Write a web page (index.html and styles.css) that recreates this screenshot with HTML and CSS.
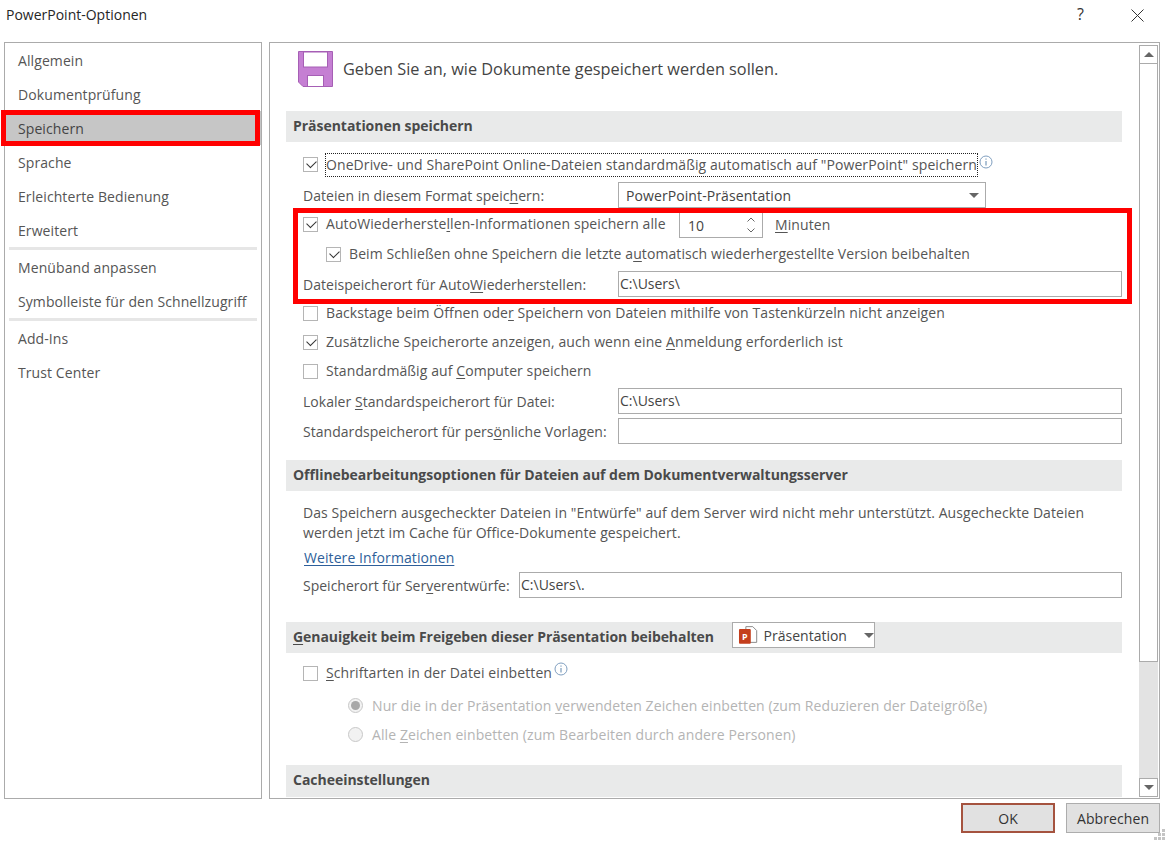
FILE: index.html
```html
<!DOCTYPE html>
<html lang="de">
<head>
<meta charset="utf-8">
<title>PowerPoint-Optionen</title>
<link rel="stylesheet" href="styles.css">
</head>
<body>
<div class="dialog">
  <header class="titlebar">
    <span class="title">PowerPoint-Optionen</span>
    <span class="help">?</span>
    <svg class="close" width="13" height="13" viewBox="0 0 13 13"><path d="M.5.5l12 12M12.500.5l-12 12" stroke="#333" fill="none"/></svg>
  </header>
  <div class="main">
    <nav class="nav">
      <div class="nav-item">Allgemein</div>
      <div class="nav-item">Dokumentprüfung</div>
      <div class="nav-item selected">Speichern</div>
      <div class="nav-item">Sprache</div>
      <div class="nav-item">Erleichterte Bedienung</div>
      <div class="nav-item">Erweitert</div>
      <div class="nav-sep"></div>
      <div class="nav-item">Menüband anpassen</div>
      <div class="nav-item">Symbolleiste für den Schnellzugriff</div>
      <div class="nav-sep"></div>
      <div class="nav-item">Add-Ins</div>
      <div class="nav-item">Trust Center</div>
    </nav>
    <section class="panel">
      <div class="content">
        <div class="page-head">
          <svg class="floppy" width="35" height="36" viewBox="0 0 35 36">
            <path d="M.5.500h34v35H5l-4.500-4.500z" fill="#c57fd3" stroke="#a65fb5"/>
            <rect x="5.500" y="1" width="24" height="15" fill="#fff" stroke="#a65fb5"/>
            <rect x="9.500" y="24.500" width="16" height="11" fill="#fff" stroke="#a65fb5"/>
          </svg>
          <span class="page-title">Geben Sie an, wie Dokumente gespeichert werden sollen.</span>
        </div>

        <h2 class="bar">Präsentationen speichern</h2>
        <div class="row first">
          <span class="cb on"></span>
          <span class="label focus">OneDrive- und SharePoint Online-Dateien standardmäßig automatisch auf "PowerPoint" speichern</span>
          <svg class="info raised" width="14" height="14" viewBox="0 0 14 14"><circle cx="7" cy="7" r="6" fill="none" stroke="#7f9fc0"/><path d="M7 6v4.500M7 3.500v1.200" stroke="#5f86ad" fill="none"/></svg>
        </div>
        <div class="row mt2">
          <span class="field-label">Dateien in diesem Format speic<u>h</u>ern:</span>
          <span class="select"><span>PowerPoint-Präsentation</span><i class="caret"></i></span>
        </div>
        <div class="highlight">
          <div class="row">
            <span class="cb on"></span>
            <span class="label auto-label">AutoWiederherste<u>l</u>len-Informationen speichern alle</span>
            <span class="spin"><span>10</span>
              <svg width="10" height="20" viewBox="0 0 10 20"><path d="M1.500 6.500L5 3l3.500 3.500M1.500 13.500L5 17l3.500-3.500" stroke="#666" fill="none"/></svg>
            </span>
            <span class="minutes"><u>M</u>inuten</span>
          </div>
          <div class="row mt1 indent">
            <span class="cb on"></span>
            <span class="label">Beim Schließen ohne Speichern die letzte a<u>u</u>tomatisch wiederhergestellte Version beibehalten</span>
          </div>
          <div class="row mt1">
            <span class="field-label">Dateispeicherort für Auto<u>W</u>iederherstellen:</span>
            <span class="input">C:\Users\</span>
          </div>
        </div>
        <div class="row">
          <span class="cb"></span>
          <span class="label">Backstage beim Öffnen ode<u>r</u> Speichern von Dateien mithilfe von Tastenkürzeln nicht anzeigen</span>
        </div>
        <div class="row">
          <span class="cb on"></span>
          <span class="label">Zusätzliche Speicherorte anzeigen, auch wenn eine <u>A</u>nmeldung erforderlich ist</span>
        </div>
        <div class="row">
          <span class="cb"></span>
          <span class="label">Standardmäßig auf <u>C</u>omputer speichern</span>
        </div>
        <div class="row mt1">
          <span class="field-label">Lokaler <u>S</u>tandardspeicherort für Datei:</span>
          <span class="input">C:\Users\</span>
        </div>
        <div class="row mt1">
          <span class="field-label">Standardspeicherort für pers<u>ö</u>nliche Vorlagen:</span>
          <span class="input"></span>
        </div>

        <h2 class="bar bar-offline">Offlinebearbeitungsoptionen für Dateien auf dem Dokumentverwaltungsserver</h2>
        <p class="para">Das Speichern ausgecheckter Dateien in "Entwürfe" auf dem Server wird nicht mehr unterstützt. Ausgecheckte Dateien werden jetzt im Cache für Office-Dokumente gespeichert.</p>
        <div class="link-row"><span class="link">Weitere Informationen</span></div>
        <div class="row mt1">
          <span class="field-label short">Speicherort für Ser<u>v</u>erentwürfe:</span>
          <span class="input">C:\Users\.</span>
        </div>

        <div class="bar bar-fidelity">
          <h2 class="bar-text"><u>G</u>enauigkeit beim Freigeben dieser Präsentation beibehalten</h2>
          <span class="pres-select">
            <svg width="21" height="20" viewBox="0 0 21 20">
              <path d="M8 1.500h7l4 4v12H8z" fill="#fff" stroke="#8a8a8a"/>
              <rect x="1" y="4" width="12" height="15" rx="1" fill="#c43e1c"/>
              <text x="4" y="15" class="pp-letter">P</text>
            </svg>
            <span>Präsentation</span><i class="caret"></i>
          </span>
        </div>
        <div class="row mt6">
          <span class="cb"></span>
          <span class="label"><u>S</u>chriftarten in der Datei einbetten</span>
          <svg class="info raised2" width="14" height="14" viewBox="0 0 14 14"><circle cx="7" cy="7" r="6" fill="none" stroke="#7f9fc0"/><path d="M7 6v4.500M7 3.500v1.200" stroke="#5f86ad" fill="none"/></svg>
        </div>
        <div class="row radio-row mt3">
          <span class="radio on"></span>
          <span class="label muted">Nur die in der Präsentation <u>v</u>erwendeten Zeichen einbetten (zum Reduzieren der Dateigröße)</span>
        </div>
        <div class="row radio-row">
          <span class="radio"></span>
          <span class="label muted">Alle <u>Z</u>eichen einbetten (zum Bearbeiten durch andere Personen)</span>
        </div>
        <h2 class="bar bar-cache">Cacheeinstellungen</h2>
      </div>
      <div class="scrollbar">
        <span class="sb-btn"><i class="tri up"></i></span>
        <span class="sb-thumb"></span>
        <span class="sb-track"></span>
        <span class="sb-btn"><i class="tri down"></i></span>
      </div>
    </section>
  </div>
  <footer class="footer">
    <span class="btn default">OK</span>
    <span class="btn">Abbrechen</span>
    <svg class="grip" width="11" height="11" viewBox="0 0 11 11"><path d="M8 0h3v3H8zM4 4h3v3H4zM8 4h3v3H8zM0 8h3v3H0zM4 8h3v3H4zM8 8h3v3H8z" fill="#c4c4c4"/></svg>
  </footer>
</div>
</body>
</html>
```

FILE: styles.css
```css
* { box-sizing: border-box; }
html, body { margin: 0; padding: 0; background: #fff; }
body { font-family: "Open Sans", "Noto Sans", sans-serif; font-size: 14px; letter-spacing: .09px; color: #555; }
u { text-underline-offset: 2px; }
.dialog { width: 1167px; height: 841px; overflow: hidden; position: relative; display: flex; flex-direction: column; }

.titlebar { height: 42px; flex: none; display: flex; align-items: flex-start; padding: 5px 23px 0 6px; }
.title { color: #262626; flex: 1; line-height: 19px; letter-spacing: 0; }
.help { color: #333; width: 54px; font-size: 16px; line-height: 19px; }
.close { margin-top: 4px; }

.main { height: 757px; flex: none; display: flex; padding: 0 7px 0 4px; gap: 7px; }
.nav { width: 258px; flex: none; border: 1px solid #ababab; }
.nav-item { height: 34px; padding-left: 13px; display: flex; align-items: center; position: relative; white-space: nowrap; }
.nav-item.selected { background: #c6c6c6; color: #444; }
.nav-item.selected::after { content: ""; position: absolute; left: -4px; right: 1px; top: -1px; bottom: -1px; border: 5px solid #f00; }
.nav-sep { height: 3px; background: #e6e6e6; margin: 0 4px; }

.panel { flex: 1; border: 1px solid #ababab; display: flex; min-width: 0; }
.content { width: 869px; flex: none; overflow: hidden; padding: 0 0 0 16px; }
.page-head { height: 68px; display: flex; align-items: flex-start; padding: 8px 0 0 12px; }
.floppy { flex: none; }
.page-title { font-size: 16.3px; letter-spacing: 0; margin: 7px 0 0 10px; color: #444; line-height: 22px; }

.bar { margin: 0; height: 31px; width: 836px; background: #e9eaea; font-size: 14px; font-weight: 700; letter-spacing: -.03px; color: #4a4a4a; padding: 0 7px 2px; display: flex; align-items: center; white-space: nowrap; }
.bar-offline { margin-top: 14px; }
.bar-fidelity { margin-top: 22px; align-items: flex-start; padding-bottom: 0; }
.bar-text { margin: 0; font-size: 14px; letter-spacing: -.07px; line-height: 29px; font-weight: 700; }
.bar-cache { margin-top: 16px; height: 32px; padding-bottom: 4px; }

.row { height: 29px; width: 836px; display: flex; align-items: center; padding-left: 17px; white-space: nowrap; }
.row.first { margin-top: 8px; }
.mt1 { margin-top: 1px; }
.mt2 { margin-top: 2px; }
.mt3 { margin-top: 3px; }
.mt6 { margin-top: 6px; }
.row.indent { padding-left: 40px; }
.row.radio-row { padding-left: 62px; }

.cb { width: 15px; height: 15px; flex: none; border: 1px solid #b5b5b5; background: #fff; margin-right: 8px; position: relative; }
.cb.on::after { content: ""; position: absolute; left: 3px; top: 2px; width: 8px; height: 5px; border-left: 1.500px solid #333; border-bottom: 1.500px solid #333; transform: rotate(-45deg); }
.radio { width: 15px; height: 15px; flex: none; border: 1px solid #c8c8c8; border-radius: 50%; background: #f2f2f2; margin-right: 9px; position: relative; }
.radio.on::after { content: ""; position: absolute; inset: 2px; border-radius: 50%; background: #a8a8a8; }
.label { line-height: 20px; margin-bottom: 2px; }
.focus { height: 24px; line-height: 22px; border: 1px dotted #222; margin: 0 0 0 -1px; }
.muted { color: #b4b4b4; margin: 1px 0 0; }
.info { flex: none; }
.raised { margin: -6px 0 0 1px; }
.raised2 { margin: -10px 0 0 2px; }

.field-label { width: 315px; flex: none; margin-bottom: 1px; letter-spacing: .04px; }
.field-label.short { width: 216px; letter-spacing: 0; }
.input { flex: 1; height: 26px; margin-bottom: 1px; border: 1px solid #ababab; background: #fff; padding-left: 1px; line-height: 24px; letter-spacing: 0; color: #444; }
.select { width: 368px; height: 26px; margin-bottom: 1px; border: 1px solid #ababab; display: flex; align-items: center; justify-content: space-between; padding: 0 6px 0 7px; color: #444; background: #fff; }
.caret { width: 0; height: 0; border-left: 5px solid transparent; border-right: 5px solid transparent; border-top: 5px solid #666; }

.highlight { position: relative; width: 836px; }
.highlight::after { content: ""; position: absolute; left: 7px; right: -10px; top: -2px; bottom: -5px; border: 5px solid #f00; pointer-events: none; }
.auto-label { margin-right: 0; width: 353px; flex: none; }
.spin { width: 84px; height: 26px; flex: none; border: 1px solid #ababab; display: flex; align-items: center; justify-content: space-between; padding: 0 6px 0 8px; color: #444; margin-top: 1px; }
.minutes { margin-left: 12px; }

.para { margin: 12px 0 0; padding: 0 24px 0 17px; width: 836px; line-height: 20px; letter-spacing: .07px; }
.link-row { height: 24px; margin-top: 3px; padding-left: 18px; line-height: 24px; }
.link { color: #2e5f9a; text-decoration: underline; text-underline-offset: 2px; }

.pres-select { height: 26px; width: 143px; margin-left: 18px; background: #fff; border: 1px solid #ababab; display: flex; align-items: center; gap: 5px; padding-left: 5px; font-weight: 400; letter-spacing: 0; color: #444; }
.pres-select .caret { margin-left: 12px; }
.pp-letter { font-size: 9px; font-weight: 700; fill: #fff; }

.scrollbar { width: 19px; margin: 2px 0 1px; flex: none; display: flex; flex-direction: column; }
.sb-btn { height: 19px; border: 1px solid #ababab; background: #fff; display: flex; align-items: center; justify-content: center; flex: none; }
.sb-thumb { height: 598px; flex: none; background: #fff; border: 1px solid #ababab; border-top: 0; }
.sb-track { flex: 1; background: #e3e3e3; }
.tri { width: 0; height: 0; border-left: 5px solid transparent; border-right: 5px solid transparent; }
.tri.up { border-bottom: 5px solid #666; }
.tri.down { border-top: 5px solid #666; }

.footer { flex: 1; display: flex; justify-content: flex-end; gap: 11px; padding: 4px 7px 0 0; align-items: flex-start; }
.btn { width: 94px; height: 30px; background: #e1e1e1; border: 1px solid #adadad; display: flex; align-items: center; justify-content: center; color: #333; }
.btn.default { border: 2px solid #a5533f; }
.grip { position: absolute; right: 2px; bottom: 1px; }
```
